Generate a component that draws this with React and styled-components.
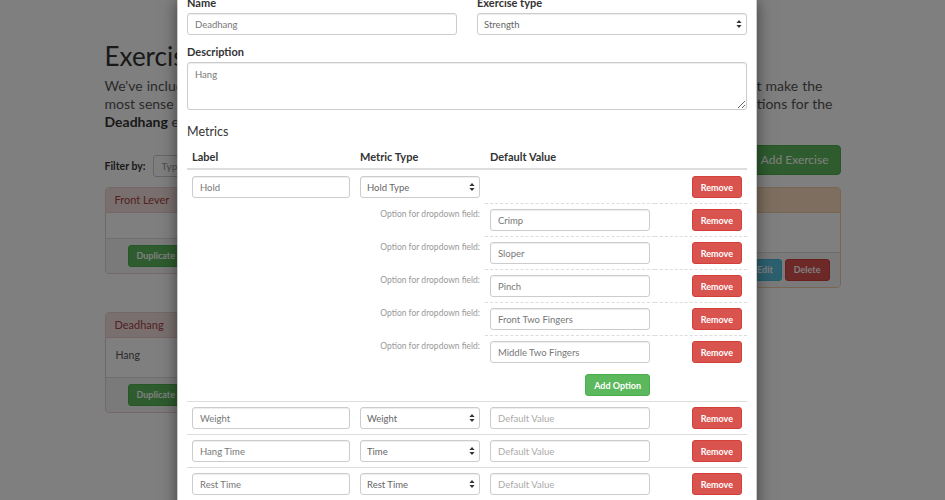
import React from 'react';
import styled, { createGlobalStyle } from 'styled-components';
import { Plus } from 'lucide-react';

const GlobalStyle = createGlobalStyle`
  html, body { margin: 0; padding: 0; }
  body {
    font-family: Lato, "Open Sans", "Liberation Sans", sans-serif;
    color: #333;
    background: #fff;
  }
  * { box-sizing: border-box; }
`;

const Screen = styled.div`
  position: relative;
  width: 945px;
  height: 500px;
  overflow: hidden;
`;

/* ---------- page behind the modal ---------- */

const Container = styled.div`
  width: 736px;
  margin: 0 auto;
  padding-top: 42px;
`;

const Title = styled.h1`
  margin: 0;
  font-size: 26px;
  line-height: 1.1;
  font-weight: 400;
  color: #333;
`;

const Lead = styled.p`
  margin: 6px 0 0;
  font-size: 14px;
  line-height: 18px;
  color: #555;
`;

const LeadLine = styled.span`
  display: block;
  width: ${p => p.$w}px;
  line-height: 18px;
  white-space: nowrap;
  text-align: ${p => (p.$justify ? 'justify' : 'left')};
  text-align-last: ${p => (p.$justify ? 'justify' : 'left')};
  b { color: #333; }
`;

const FilterBar = styled.div`
  display: flex;
  align-items: flex-start;
  justify-content: space-between;
  height: 30px;
  margin-top: 14px;
`;

const FilterGroup = styled.label`
  display: flex;
  align-items: center;
  gap: 8px;
  margin-top: 10px;
  font-size: 10.5px;
  font-weight: 700;
`;

const FilterInput = styled.input`
  width: 220px;
  height: 22px;
  padding: 0 7px;
  border: 1px solid #ccc;
  border-radius: 3px;
  font: inherit;
  font-weight: 400;
  font-size: 10px;
  &::placeholder { color: #999; }
`;

const Btn = styled.button`
  display: inline-flex;
  align-items: center;
  justify-content: center;
  gap: ${p => (p.$size === 'lg' ? 3 : 0)}px;
  height: ${p => (p.$size === 'lg' ? 30 : 22)}px;
  padding: ${p => (p.$size === 'lg' ? '0 11px 0 8px' : '0 8px')};
  border: 1px solid ${p => p.$border};
  border-radius: ${p => (p.$size === 'lg' ? 4 : 3)}px;
  background: ${p => p.$bg};
  color: #fff;
  font-family: inherit;
  font-size: ${p => (p.$size === 'lg' ? 12 : 9)}px;
  font-weight: ${p => (p.$size === 'lg' ? 400 : 700)};
  white-space: nowrap;
  cursor: pointer;
`;

const CardGrid = styled.div`
  display: grid;
  grid-template-columns: 1fr 1fr;
  column-gap: 20px;
  row-gap: 24px;
  align-items: start;
  margin-top: 12px;
`;

const Card = styled.section`
  border: 1px solid ${p => p.$border};
  border-radius: 4px;
  background: #fff;
  overflow: hidden;
`;

const CardHeader = styled.header`
  display: flex;
  align-items: center;
  height: 25px;
  padding: 0 9px;
  border-bottom: 1px solid ${p => p.$border};
  background: ${p => p.$bg};
  color: #a94442;
  font-size: 11px;
`;

const CardBody = styled.div`
  min-height: ${p => p.$min || 0}px;
  padding: 8px 10px 12px;
  font-size: 10.5px;
  line-height: 19px;
  color: #555;
`;

const CardFooter = styled.footer`
  display: flex;
  justify-content: space-between;
  padding: 6px 10px 6px 22px;
  border-top: 1px solid #ddd;
  background: #f5f5f5;
`;

const BtnGroup = styled.div`
  display: flex;
  gap: 3px;
`;

/* ---------- modal ---------- */

const Overlay = styled.div`
  position: absolute;
  inset: 0;
  background: rgba(0, 0, 0, 0.5);
`;

const Modal = styled.div`
  width: 580px;
  height: 520px;
  margin: -5px 0 0 177px;
  border: 1px solid rgba(0, 0, 0, 0.2);
  background: #fff;
  box-shadow: 0 5px 15px rgba(0, 0, 0, 0.5);
`;

const ModalBody = styled.div`
  padding: 0 9px;
`;

const FieldRow = styled.div`
  display: grid;
  grid-template-columns: 1fr 1fr;
  column-gap: 20px;
`;

const FieldGroup = styled.div`
  margin-bottom: ${p => (p.$mb === undefined ? 10 : p.$mb)}px;
`;

const FieldLabel = styled.label`
  display: block;
  margin-bottom: 3px;
  font-size: 11px;
  line-height: 14px;
  font-weight: 700;
  color: #333;
`;

const fieldCss = `
  display: block;
  width: 100%;
  border: 1px solid #ccc;
  border-radius: 3px;
  background: #fff;
  box-shadow: inset 0 1px 1px rgba(0, 0, 0, 0.075);
  font-family: inherit;
  font-size: 9.5px;
  color: #777;
  outline: none;
  &::placeholder { color: #aaa; }
`;

const TextInput = styled.input`
  ${fieldCss}
  height: 22px;
  padding: 0 7px;
`;

const TextArea = styled.textarea`
  ${fieldCss}
  height: 48px;
  padding: 6px 7px;
  resize: vertical;
`;

const SelectWrap = styled.div`
  position: relative;
`;

const Select = styled.select`
  ${fieldCss}
  height: 22px;
  padding: 0 16px 0 6px;
  appearance: none;
  -webkit-appearance: none;
  color: #666;
`;

const SelectArrows = styled.svg`
  position: absolute;
  right: 5px;
  top: 50%;
  transform: translateY(-50%);
  pointer-events: none;
`;

const SectionTitle = styled.h4`
  margin: 13px 0 0;
  font-size: 12.5px;
  line-height: 18px;
  font-weight: 400;
  color: #333;
`;

const cols = '168px 130px 170px 92px';

const HeadRow = styled.div`
  display: grid;
  grid-template-columns: ${cols};
`;

const HeadCell = styled.div`
  padding: 9px 5px 4px;
  border-bottom: 2px solid #ddd;
  font-size: 11px;
  line-height: 14px;
  font-weight: 700;
`;

const Row = styled.div`
  display: grid;
  grid-template-columns: ${cols};
`;

const lines = {
  solid: '1px solid #ddd',
  dashed: '1px dashed #ddd',
  none: '1px solid transparent',
};

const Cell = styled.div`
  display: flex;
  align-items: flex-start;
  justify-content: ${p => (p.$end ? 'flex-end' : 'flex-start')};
  grid-column: span ${p => p.$span || 1};
  padding: 5px;
  border-top: ${p => lines[p.$line || 'solid']};
  & > * { flex: ${p => (p.$end ? '0 0 auto' : '1 1 auto')}; }
`;

const OptionLabel = styled.span`
  margin-top: -1px;
  text-align: right;
  font-size: 8.5px;
  line-height: 12px;
  color: #999;
`;

const Arrows = () => (
  <SelectArrows width="6" height="9" viewBox="0 0 6 9">
    <path d="M3 0.5 L5.6 3.6 L0.4 3.6 Z M3 8.5 L5.6 5.4 L0.4 5.4 Z" fill="#333" />
  </SelectArrows>
);

const SelectField = ({ value }) => (
  <SelectWrap>
    <Select defaultValue={value}>
      <option>{value}</option>
    </Select>
    <Arrows />
  </SelectWrap>
);

const metrics = [
  { label: 'Hold', type: 'Hold Type', options: ['Crimp', 'Sloper', 'Pinch', 'Front Two Fingers', 'Middle Two Fingers'] },
  { label: 'Weight', type: 'Weight' },
  { label: 'Hang Time', type: 'Time' },
  { label: 'Rest Time', type: 'Rest Time' },
];

const green = { $bg: '#5cb85c', $border: '#4cae4c' };
const red = { $bg: '#d9534f', $border: '#d43f3a' };
const blue = { $bg: '#5bc0de', $border: '#46b8da' };

const MetricRows = ({ metric, first }) => (
  <>
    <Row>
      <Cell $line={first ? 'none' : 'solid'}><TextInput defaultValue={metric.label} /></Cell>
      <Cell $line={first ? 'none' : 'solid'}><SelectField value={metric.type} /></Cell>
      <Cell $line={first ? 'none' : 'solid'}>
        {!metric.options && <TextInput placeholder="Default Value" />}
      </Cell>
      <Cell $line={first ? 'none' : 'solid'} $end><Btn {...red}>Remove</Btn></Cell>
    </Row>
    {metric.options && metric.options.map(opt => (
      <Row key={opt}>
        <Cell $span={2} $line="none" $end>
          <OptionLabel>Option for dropdown field:</OptionLabel>
        </Cell>
        <Cell $line="dashed"><TextInput defaultValue={opt} /></Cell>
        <Cell $line="dashed" $end><Btn {...red}>Remove</Btn></Cell>
      </Row>
    ))}
    {metric.options && (
      <Row>
        <Cell $span={2} $line="none" />
        <Cell $line="none" $end><Btn {...green}>Add Option</Btn></Cell>
        <Cell $line="none" />
      </Row>
    )}
  </>
);

const CardActions = () => (
  <CardFooter>
    <Btn {...green}>Duplicate</Btn>
    <BtnGroup>
      <Btn {...blue}>Edit</Btn>
      <Btn {...red}>Delete</Btn>
    </BtnGroup>
  </CardFooter>
);

const App = () => (
  <Screen>
    <GlobalStyle />
    <Container>
      <Title>Exercises</Title>
      <Lead>
        <LeadLine $w={718} $justify>We've included a few default exercises to help you get started, each with a set of metrics and options that make the</LeadLine>
        <LeadLine $w={728} $justify>most sense for them. Edit any exercise to change its metrics and values, or look below at the dropdown options for the</LeadLine>
        <LeadLine $w={728}><b>Deadhang</b> exercise, and add your own when you are ready.</LeadLine>
      </Lead>
      <FilterBar>
        <FilterGroup>
          Filter by:
          <FilterInput placeholder="Type to filter exercises..." />
        </FilterGroup>
        <Btn {...green} $size="lg"><Plus size={11} strokeWidth={3} />Add Exercise</Btn>
      </FilterBar>
      <CardGrid>
        <Card $border="#ebccd1">
          <CardHeader $bg="#f2dede" $border="#ebccd1">Front Lever</CardHeader>
          <CardBody $min={25} />
          <CardActions />
        </Card>
        <Card $border="#efcca8">
          <CardHeader $bg="#fadcbf" $border="#efcca8">Campus Ladder</CardHeader>
          <CardBody $min={39} />
          <CardActions />
        </Card>
        <Card $border="#ebccd1">
          <CardHeader $bg="#f2dede" $border="#ebccd1">Deadhang</CardHeader>
          <CardBody>Hang</CardBody>
          <CardActions />
        </Card>
      </CardGrid>
    </Container>

    <Overlay>
      <Modal>
        <ModalBody>
          <FieldRow>
            <FieldGroup>
              <FieldLabel>Name</FieldLabel>
              <TextInput defaultValue="Deadhang" />
            </FieldGroup>
            <FieldGroup>
              <FieldLabel>Exercise type</FieldLabel>
              <SelectField value="Strength" />
            </FieldGroup>
          </FieldRow>
          <FieldGroup $mb={0}>
            <FieldLabel>Description</FieldLabel>
            <TextArea defaultValue="Hang" />
          </FieldGroup>
          <SectionTitle>Metrics</SectionTitle>
          <HeadRow>
            <HeadCell>Label</HeadCell>
            <HeadCell>Metric Type</HeadCell>
            <HeadCell>Default Value</HeadCell>
            <HeadCell />
          </HeadRow>
          {metrics.map((m, i) => <MetricRows key={m.label} metric={m} first={i === 0} />)}
        </ModalBody>
      </Modal>
    </Overlay>
  </Screen>
);

export default App;
